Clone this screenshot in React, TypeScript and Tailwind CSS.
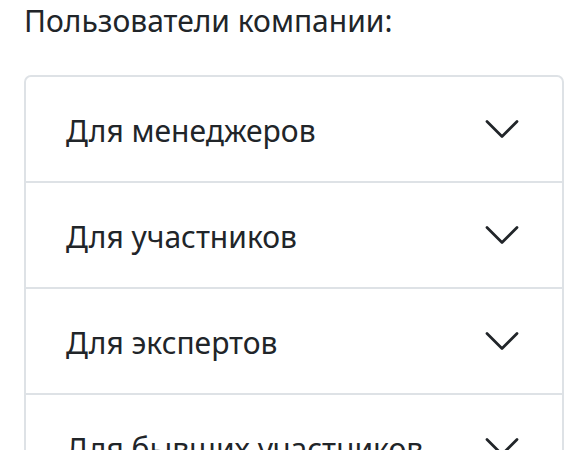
import React from 'react';

const groups = ['Для менеджеров', 'Для участников', 'Для экспертов', 'Для бывших участников'];

const Chevron = () => (
  <svg viewBox="0 0 16 16" className="w-10 h-10 shrink-0" fill="none" stroke="#212529" strokeWidth="1.1" strokeLinecap="round" strokeLinejoin="round">
    <path d="M2 5L8 11L14 5" />
  </svg>
);

export default function App() {
  return (
    <div className="min-h-screen bg-white px-6 pt-0 text-[#212529]" style={{ fontFamily: '"Noto Sans", "Open Sans", sans-serif' }}>
      <h2 className="text-[30px] leading-[38px] font-normal pt-[2px]">Пользователи компании:</h2>
      <div className="mt-[35px] border-2 border-[#dee2e6] rounded-[7px] overflow-hidden">
        {groups.map((g, i) => (
          <div
            key={g}
            className={`flex items-center justify-between pl-[40px] pr-[40px] ${i > 0 ? 'h-[106px] border-t-2 border-[#dee2e6]' : 'h-[104px]'}`}
          >
            <span className="text-[30px] leading-[40px] pt-[3px]">{g}</span>
            <Chevron />
          </div>
        ))}
      </div>
    </div>
  );
}
